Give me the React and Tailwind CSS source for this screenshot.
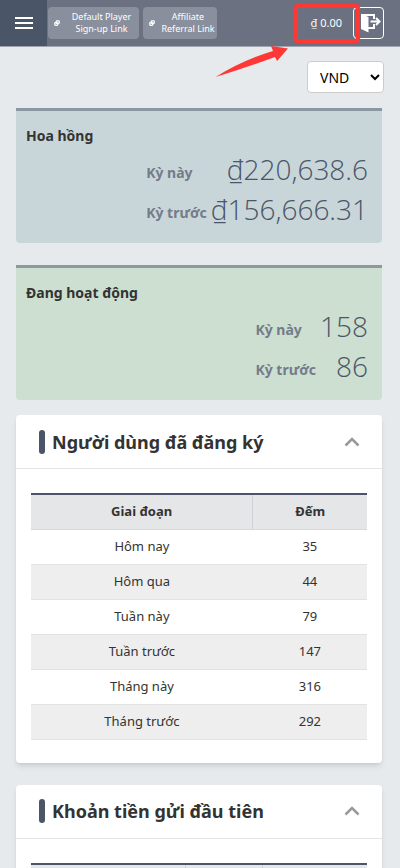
const SUMMARIES = [
  {
    title: "Hoa hồng",
    box: "bg-[#c8d6d9] border-[#8a97a3]",
    rows: [
      { label: "Kỳ này", value: "₫220,638.6" },
      { label: "Kỳ trước", value: "₫156,666.31" },
    ],
  },
  {
    title: "Đang hoạt động",
    box: "bg-[#ccdfd0] border-[#8c9a9b]",
    rows: [
      { label: "Kỳ này", value: "158" },
      { label: "Kỳ trước", value: "86" },
    ],
  },
];

const REGISTERED = [
  ["Hôm nay", 35],
  ["Hôm qua", 44],
  ["Tuần này", 79],
  ["Tuần trước", 147],
  ["Tháng này", 316],
  ["Tháng trước", 292],
];

const LinkIcon = () => (
  <svg viewBox="0 0 24 24" className="size-[6px] shrink-0" fill="none" stroke="currentColor" strokeWidth="5" aria-hidden="true">
    <rect x="9" y="3" width="12" height="11" rx="3" />
    <rect x="3" y="10" width="12" height="11" rx="3" />
  </svg>
);

const LogoutIcon = () => (
  <svg viewBox="0 0 20 20" className="size-5" fill="none" stroke="currentColor" strokeWidth="2" aria-hidden="true">
    <path d="M0 1 L7.500 4 V19.500 L0 16 Z" fill="currentColor" stroke="none" />
    <path d="M0 2 H13 V6 M13 11 V15 H7" />
    <path d="M9.500 8.500 H18 M15 5 L18.500 8.500 L15 12" />
  </svg>
);

const HeaderLink = ({ first, second, className }) => (
  <a
    href="#"
    className={`flex h-8 items-center gap-1 rounded bg-[#8a8f9d] pl-1.5 text-center text-[9px] leading-3 text-white ${className}`}
  >
    <LinkIcon />
    <span className="flex-1 whitespace-nowrap">
      {first}
      <br />
      {second}
    </span>
  </a>
);

const TopBar = () => (
  <header className="relative flex h-[47px] items-center border-b border-[#a0a5b0] bg-[#6b7180] text-white">
    <button type="button" aria-label="Menu" className="flex h-full w-[47px] flex-col items-center justify-center gap-[3px] bg-[#4a5568]">
      <span className="h-0.5 w-[18px] bg-white" />
      <span className="h-0.5 w-[18px] bg-white" />
      <span className="h-0.5 w-[18px] bg-white" />
    </button>
    <nav className="flex gap-1 pl-px">
      <HeaderLink first="Default Player" second="Sign-up Link" className="w-[91px]" />
      <HeaderLink first="Affiliate" second="Referral Link" className="w-[74px]" />
    </nav>
    <div className="ml-auto flex items-center gap-[11px] pr-4">
      <span className="text-[11px]">₫ 0.00</span>
      <button type="button" aria-label="Logout" className="flex h-8 w-[31px] items-center justify-center rounded border border-white pl-1">
        <LogoutIcon />
      </button>
    </div>
    {/* highlight round the balance, with its arrow */}
    <div className="absolute top-1 right-10 h-[39px] w-[66px] rounded border-4 border-[#fd3835]" />
    <svg viewBox="0 0 74 32" className="absolute top-[46px] right-[111px] h-8 w-[74px]" aria-hidden="true">
      <path d="M0.500 31 Q28 14 58 5 L56 0 L73 2.500 L62 15 L60 11 Q30 22 0.500 31 Z" fill="#fd3835" />
    </svg>
  </header>
);

const SummaryCard = ({ title, box, rows }) => (
  <section className={`rounded-b border-t-[3px] px-2.5 pt-3 pb-3.5 ${box}`}>
    <h2 className="text-sm leading-[26px] font-bold text-[#333]">{title}</h2>
    <dl className="grid auto-rows-[40px] grid-cols-[auto_auto] items-center justify-end gap-x-1 pr-1">
      {rows.map((row) => (
        <div key={row.label} className="contents">
          <dt className="pt-2 text-sm font-bold text-[#747b8a]">{row.label}</dt>
          <dd className="text-right font-['Open_Sans','Noto_Sans',sans-serif] text-[28px] leading-10 font-light text-[#4a5568]">
            {row.value}
          </dd>
        </div>
      ))}
    </dl>
  </section>
);

const Panel = ({ title, children }) => (
  <section className="rounded bg-white shadow-md">
    <header className="flex h-[54px] items-center border-b border-[#e2e4e6] pr-[22px] pl-[23px]">
      <span className="h-6 w-1.5 rounded-full bg-[#4a5568]" />
      <h2 className="ml-[7px] flex-1 text-lg font-bold text-[#333]">{title}</h2>
      <button type="button" aria-label={title} className="text-[#999]">
        <svg viewBox="0 0 16 10" className="h-2.5 w-4" fill="none" stroke="currentColor" strokeWidth="2.5" aria-hidden="true">
          <path d="M1.500 8.500 L8 2 L14.500 8.500" />
        </svg>
      </button>
    </header>
    <div className="px-[15px] pt-6 pb-[23px]">{children}</div>
  </section>
);

const App = () => (
  <div className="h-screen overflow-hidden bg-[#e6eaed] font-['Noto_Sans','Open_Sans',sans-serif] text-[#333]">
    <TopBar />
    <div className="flex justify-end px-4 pt-3.5 pb-[15px]">
      <select aria-label="Currency" defaultValue="VND" className="h-8 w-[77px] rounded border border-[#ccc] bg-white pl-2 text-sm text-black">
        <option>VND</option>
      </select>
    </div>

    <main className="pr-[18px] pl-4">
      <div className="mb-[15px] grid gap-[22px]">
        {SUMMARIES.map((item) => (
          <SummaryCard key={item.title} {...item} />
        ))}
      </div>

      <div className="grid gap-[22px]">
        <Panel title="Người dùng đã đăng ký">
          <table className="w-full border-collapse border-t-2 border-[#4a5568] text-center text-[13px]">
            <thead>
              <tr className="h-[35px] border-b border-[#d8dadd] bg-[#e5e6e8]">
                <th className="w-[66%] border-r border-[#d0d2d6] font-bold">Giai đoạn</th>
                <th className="font-bold">Đếm</th>
              </tr>
            </thead>
            <tbody>
              {REGISTERED.map(([period, count]) => (
                <tr key={period} className="h-[35px] border-b border-[#e2e2e2] even:bg-[#eee]">
                  <td>{period}</td>
                  <td>{count}</td>
                </tr>
              ))}
            </tbody>
          </table>
        </Panel>

        <Panel title="Khoản tiền gửi đầu tiên">
          <table className="w-full border-collapse border-t-2 border-[#4a5568]">
            <thead>
              <tr className="h-[35px] bg-[#e5e6e8]">
                <th className="w-[46%] border-r border-[#d0d2d6]" />
                <th className="w-[23%] border-r border-[#d0d2d6]" />
                <th />
              </tr>
            </thead>
          </table>
        </Panel>
      </div>
    </main>
  </div>
);

export default App;
